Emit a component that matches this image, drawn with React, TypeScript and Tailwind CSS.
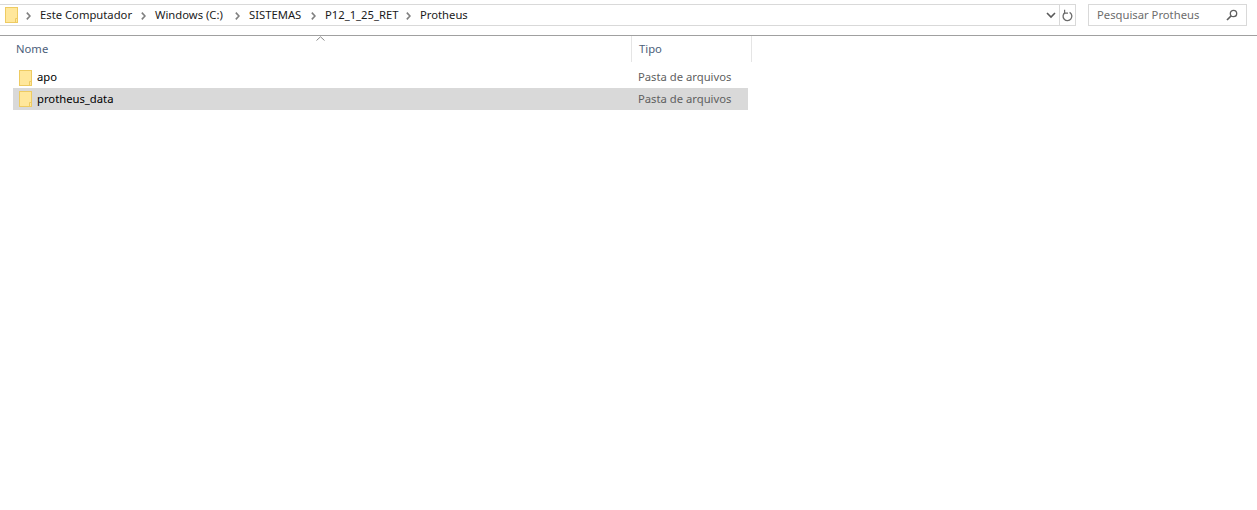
const FONT = "font-['Noto_Sans','Open_Sans',sans-serif]";

function FolderIcon({ className }: { className?: string }) {
  return (
    <svg width="13" height="16" viewBox="0 0 13 16" className={className}>
      <rect x="0.5" y="0.5" width="12" height="15" fill="#ffe79b" stroke="#eecb62" />
      <path d="M10.5 15.5V11.5H12.5" fill="none" stroke="#eecb62" />
    </svg>
  );
}

function Sep({ className = "ml-[9px]" }: { className?: string }) {
  return (
    <svg width="5" height="8" viewBox="0 0 5 8" className={`mr-[9px] mt-px shrink-0 ${className}`}>
      <path d="M0.8 0.6L4 4L0.8 7.4" fill="none" stroke="#7f7f7f" strokeWidth="1.6" />
    </svg>
  );
}

function Row({ name, selected }: { name: string; selected?: boolean }) {
  return (
    <div className={`flex items-center w-[735px] ml-[13px] ${selected ? "h-[22px] bg-[#d9d9d9]" : "h-[21px]"}`}>
      <FolderIcon className="ml-[6px] shrink-0" />
      <span className="ml-[5px] w-[601px] text-black whitespace-nowrap">{name}</span>
      <span className="text-[#5f5f5f] whitespace-nowrap">Pasta de arquivos</span>
    </div>
  );
}

export default function App() {
  return (
    <div className={`w-[1257px] h-[510px] bg-white text-[11.25px] overflow-hidden ${FONT}`}>
      {/* Address bar */}
      <div className="flex items-start h-[35px] pt-[4px]">
        <div className="flex items-center w-[1076px] h-[22px] border border-[#d9d9d9] border-l-0">
          <FolderIcon className="ml-[5px] shrink-0" />
          <div className="flex items-center text-[#1a1a1a] whitespace-nowrap">
            <Sep className="ml-[8px]" />
            <span className="w-[92px]">Este Computador</span>
            <Sep />
            <span className="w-[71px]">Windows (C:)</span>
            <Sep />
            <span className="w-[53px]">SISTEMAS</span>
            <Sep />
            <span className="w-[72px]">P12_1_25_RET</span>
            <Sep />
            <span>Protheus</span>
          </div>
          <div className="flex-1" />
          <svg width="10" height="7" viewBox="0 0 10 7" className="mr-[3px]">
            <path d="M1 1l4 4 4-4" fill="none" stroke="#5a5a5a" strokeWidth="1.6" />
          </svg>
          <div className="flex items-center justify-center w-[16px] h-full border-l border-[#d9d9d9]">
            <svg width="11" height="13" viewBox="0 0 11 13">
              <path d="M3 3.6A4.4 4.4 0 1 0 7.6 3.4" fill="none" stroke="#6a6a6a" strokeWidth="1.3" />
              <path d="M2.6 0.8V4.2H6" fill="none" stroke="#6a6a6a" strokeWidth="1.2" />
            </svg>
          </div>
        </div>
        <div className="flex items-center w-[159px] h-[22px] ml-[12px] border border-[#d9d9d9] text-[#6d6d6d]">
          <span className="ml-[8px] whitespace-nowrap">Pesquisar Protheus</span>
          <div className="flex-1" />
          <svg width="12" height="12" viewBox="0 0 12 12" className="mr-[8px]">
            <circle cx="7.5" cy="4.5" r="3.2" fill="none" stroke="#5f5f5f" strokeWidth="1.3" />
            <path d="M5 7L1 11" stroke="#5f5f5f" strokeWidth="1.7" />
          </svg>
        </div>
      </div>

      <div className="h-px bg-[#a0a0a0]" />

      {/* Column headers */}
      <div className="relative flex h-[26px] text-[#4c607a]">
        <div className="flex items-center w-[632px] pl-[16px] border-r border-[#e5e5e5]">Nome</div>
        <div className="flex items-center w-[120px] pl-[7px] border-r border-[#e5e5e5]">Tipo</div>
        <svg width="9" height="5" viewBox="0 0 9 5" className="absolute left-[316px] top-0">
          <path d="M0.5 4.5L4.5 0.8L8.5 4.5" fill="none" stroke="#8a8a8a" />
        </svg>
      </div>

      {/* Files */}
      <div className="pt-[5px]">
        <Row name="apo" />
        <Row name="protheus_data" selected />
      </div>
    </div>
  );
}
